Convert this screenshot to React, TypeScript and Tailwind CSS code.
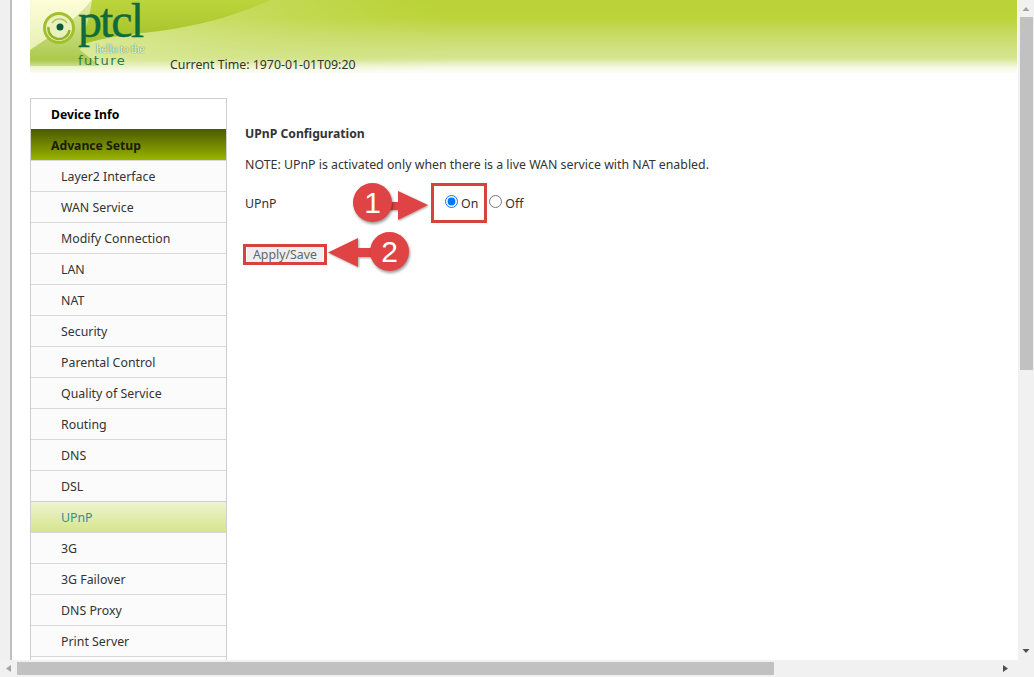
import React from "react";

const menu = [
  "Layer2 Interface", "WAN Service", "Modify Connection", "LAN", "NAT", "Security",
  "Parental Control", "Quality of Service", "Routing", "DNS", "DSL", "UPnP",
  "3G", "3G Failover", "DNS Proxy", "Print Server", "",
];

function Logo() {
  return (
    <div className="absolute left-[12px] top-0 w-[120px] h-[73px]">
      <svg width="40" height="50" viewBox="0 0 40 50" className="absolute left-0 top-0">
        <circle cx="17" cy="28" r="14.5" fill="#e9f2bf" stroke="#a3bf2e" strokeWidth="3" />
        <path d="M 6.5 27 A 10.5 10.5 0 0 0 27.5 30" fill="none" stroke="#94b428" strokeWidth="2.5" />
        <path d="M 10 23 A 9 9 0 0 1 25 23" fill="none" stroke="#b3cb45" strokeWidth="1.5" />
        <circle cx="18" cy="27" r="3.5" fill="#0f5a32" />
      </svg>
      <span className="absolute left-[36px] top-0 text-[#0f6a3c] text-[48px] leading-[42px] tracking-[-2px] [font-family:'Liberation_Serif',serif] [-webkit-text-stroke:0.4px_#0f6a3c]">
        ptcl
      </span>
      <span className="absolute left-[54px] top-[44px] whitespace-nowrap text-[#f4f8e4] text-[12px] leading-[11px] tracking-[-0.5px] [font-family:'Liberation_Serif',serif] [text-shadow:0_0_1px_#4f8a4a,0_0_1px_#4f8a4a]">
        hello to the
      </span>
      <span className="absolute left-[36px] top-[55px] whitespace-nowrap text-[#2c7a4b] text-[13px] leading-[12px] tracking-[1.5px] [font-family:'DejaVu_Sans',sans-serif]">
        future
      </span>
    </div>
  );
}

function Banner() {
  return (
    <div className="relative h-[73px] ml-[18px] overflow-hidden bg-[linear-gradient(to_bottom,#b9d235_0%,#bcd43a_25%,#c9dc69_50%,#d5e48f_78%,#e6eebb_90%,#fbfdf3_100%)]">
      <svg width="420" height="73" viewBox="0 0 420 73" className="absolute left-0 top-0">
        <defs>
          <linearGradient id="pale" x1="0" y1="0" x2="0" y2="1">
            <stop offset="0" stopColor="#fdfdd8" />
            <stop offset="1" stopColor="#e6f0b4" />
          </linearGradient>
          <linearGradient id="under" x1="0" y1="0" x2="1" y2="0">
            <stop offset="0" stopColor="#dfeca4" stopOpacity="0.95" />
            <stop offset="1" stopColor="#c9dc69" stopOpacity="0" />
          </linearGradient>
          <linearGradient id="low" x1="0" y1="0" x2="0" y2="1">
            <stop offset="0" stopColor="#e2eeb0" />
            <stop offset="1" stopColor="#a6c642" />
          </linearGradient>
          <linearGradient id="band" x1="0" y1="0" x2="0" y2="1">
            <stop offset="0" stopColor="#bdd53c" />
            <stop offset="1" stopColor="#a2c02a" />
          </linearGradient>
        </defs>
        <path d="M 50 45 C 65 40 85 36 112 33 C 160 28 200 18 240 0 L 420 0 L 420 73 L 0 73 L 0 45 Z" fill="url(#under)" />
        <path d="M 0 0 L 62 0 C 50 16 28 32 0 50 Z" fill="url(#pale)" />
        <path d="M 0 50 C 28 32 50 16 62 0 L 66 0 C 60 25 55 40 50 50 L 70 66 L 0 66 Z" fill="url(#low)" />
        <path d="M 62 0 L 240 0 C 200 18 160 28 112 33 C 85 36 65 40 50 45 C 56 30 60 15 62 0 Z" fill="url(#band)" />
      </svg>
      <div className="absolute inset-x-0 bottom-0 h-[13px] bg-gradient-to-b from-transparent to-[#fbfdf3]" />
      <Logo />
      <p className="absolute left-[140px] top-[56px] text-[12.35px] leading-[17px] text-[#333]">
        Current Time: 1970-01-01T09:20
      </p>
    </div>
  );
}

function Sidebar() {
  return (
    <div className="ml-[18px] mt-[25px] w-[197px] shrink-0 border-x border-t border-[#cfcfcf]">
      <div className="h-[30px] pl-[20px] pt-[3px] flex items-center text-[12.2px] font-bold text-black bg-white">Device Info</div>
      <div className="h-[31px] pl-[20px] pt-[4px] flex items-center text-[12.2px] font-bold text-[#1c1c00] bg-gradient-to-b from-[#4b5a00] to-[#9ab500]">
        Advance Setup
      </div>
      {menu.map((item, i) => (
        <div
          key={i}
          className={
            item === "UPnP"
              ? "h-[31px] pl-[30px] pt-[2px] flex items-center text-[12.35px] text-[#2f8f9f] border-t border-[#cfcfcf] bg-gradient-to-b from-[#eef4cf] to-[#d6e58c]"
              : "h-[31px] pl-[30px] pt-[2px] flex items-center text-[12.35px] text-[#333] border-t border-[#d8d8d8] bg-[#fbfbfb]"
          }
        >
          {item}
        </div>
      ))}
    </div>
  );
}

function Content() {
  return (
    <div className="ml-[18px] mt-[25px] flex-1 text-[12.35px] text-[#333]">
      <h2 className="mt-[27px] text-[12.2px] font-bold leading-[17px]">UPnP Configuration</h2>
      <p className="mt-[14px] leading-[17px]">NOTE: UPnP is activated only when there is a live WAN service with NAT enabled.</p>
      <div className="mt-[19px] flex items-center h-[20px]">
        <span className="w-[200px] pt-[5px]">UPnP</span>
        <input type="radio" name="upnp" defaultChecked className="m-0 mb-[2px] w-[13px] h-[13px] accent-[#0075ff]" />
        <span className="ml-[3px] pt-[5px]">On</span>
        <input type="radio" name="upnp" className="ml-[11px] mb-[2px] w-[13px] h-[13px]" />
        <span className="ml-[3px] pt-[5px]">Off</span>
      </div>
      <button className="mt-[34px] ml-[2px] h-[17px] w-[76px] bg-[#efefef] text-[#666] text-[12.35px] leading-[17px] flex items-center justify-center">
        Apply/Save
      </button>
    </div>
  );
}

function Marker({ n, className }: { n: string; className: string }) {
  return (
    <div
      className={`absolute w-[39px] h-[39px] rounded-full bg-[#e04343] text-white text-[30px] leading-[39px] text-center shadow-[1px_2px_3px_rgba(0,0,0,0.4)] [font-family:'Liberation_Sans',sans-serif] ${className}`}
    >
      {n}
    </div>
  );
}

function Annotations() {
  return (
    <>
      <div className="absolute left-[431px] top-[183px] w-[56px] h-[40px] border-[3px] border-[#d9413f]" />
      <div className="absolute left-[243px] top-[244px] w-[84px] h-[21px] border-[3px] border-[#d9413f]" />
      <svg width="50" height="36" viewBox="0 0 50 36" className="absolute left-[385px] top-[188px] drop-shadow-[1px_1px_1px_rgba(0,0,0,0.35)]">
        <path d="M 2 14 L 13 14 L 13 3 L 43 17 L 13 32 L 13 22 L 2 22 Z" fill="#e04343" />
      </svg>
      <svg width="50" height="36" viewBox="0 0 50 36" className="absolute left-[326px] top-[236px] drop-shadow-[1px_1px_1px_rgba(0,0,0,0.35)]">
        <path d="M 48 12 L 32 12 L 32 2 L 2 16.5 L 32 31 L 32 21 L 48 21 Z" fill="#e04343" />
      </svg>
      <Marker n="1" className="left-[353px] top-[183px]" />
      <Marker n="2" className="left-[370px] top-[232px]" />
    </>
  );
}

function VerticalBar() {
  return (
    <div className="w-[16px] shrink-0 bg-[#f1f1f1] flex flex-col items-center">
      <svg width="10" height="17" viewBox="0 0 10 17" className="shrink-0">
        <path d="M 1.5 11 L 5 7 L 8.5 11 Z" fill="#a3a3a3" />
      </svg>
      <div className="w-[13px] h-[353px] bg-[#c1c1c1]" />
      <div className="flex-1" />
      <svg width="10" height="16" viewBox="0 0 10 16" className="shrink-0 mb-[1px]">
        <path d="M 1.5 6 L 8.5 6 L 5 10 Z" fill="#505050" />
      </svg>
    </div>
  );
}

function HorizontalBar() {
  return (
    <div className="h-[17px] shrink-0 bg-[#f1f1f1] flex items-center">
      <svg width="17" height="17" viewBox="0 0 17 17" className="shrink-0">
        <path d="M 11 5 L 11 12 L 6 8.5 Z" fill="#a3a3a3" />
      </svg>
      <div className="w-[757px] h-[13px] bg-[#c1c1c1]" />
      <div className="flex-1" />
      <svg width="17" height="17" viewBox="0 0 17 17" className="shrink-0 mr-[20px]">
        <path d="M 6 5 L 6 12 L 11 8.5 Z" fill="#505050" />
      </svg>
    </div>
  );
}

export default function App() {
  return (
    <div className="relative w-[1034px] h-[677px] flex flex-col overflow-hidden bg-white [font-family:'Noto_Sans',sans-serif]">
      <div className="flex flex-1 min-h-0">
        <div className="w-[10px] shrink-0 bg-[#f0f0f0]" />
        <div className="w-[2px] shrink-0 bg-[#c0c0c0]" />
        <div className="flex-1 min-w-0 pr-[1px] overflow-hidden">
          <Banner />
          <div className="flex">
            <Sidebar />
            <Content />
          </div>
        </div>
        <VerticalBar />
      </div>
      <HorizontalBar />
      <Annotations />
    </div>
  );
}
